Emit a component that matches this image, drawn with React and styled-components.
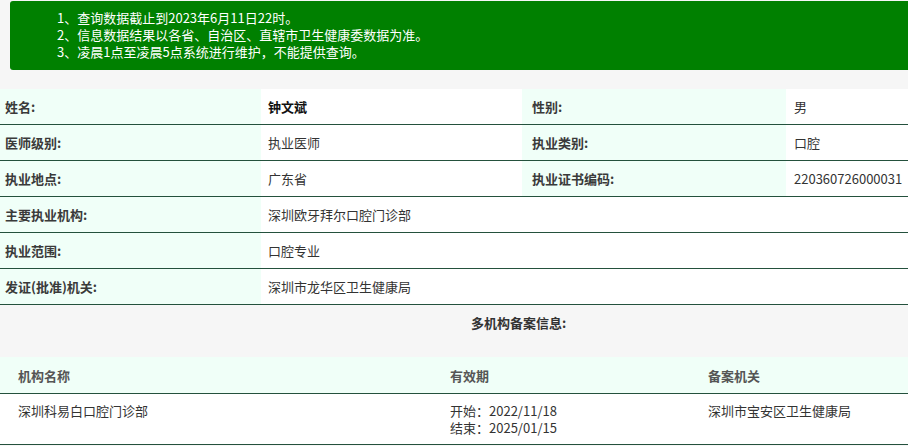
import React from "react";
import styled, { createGlobalStyle } from "styled-components";

const Global = createGlobalStyle`
  html, body { margin: 0; padding: 0; background: #f6f6f6; }
  body { font-family: "Microsoft YaHei", "Noto Sans CJK SC", "Noto Sans", sans-serif; font-size: 13px; color: #333; }
  * { box-sizing: border-box; }
`;

const Page = styled.div`
  width: 908px;
  padding-top: 1px;
`;

const Notice = styled.div`
  margin-left: 10px;
  height: 69px;
  background: #008000;
  border-radius: 3px 0 0 3px;
  color: #fff;
  padding: 8px 0 0 47px;
  line-height: 17px;
  font-size: 13px;
`;

const NoticeLine = styled.div`
  white-space: nowrap;
  height: 17px;
`;

const InfoTable = styled.div`
  margin-top: 19px;
  display: grid;
  grid-template-columns: 261px 261px 264px 1fr;
`;

const Cell = styled.div`
  height: 36px;
  border-bottom: 1px solid #24513d;
  background: ${(p) => (p.$label ? "#f0fff8" : "#fff")};
  padding-left: ${(p) => p.$pad}px;
  display: flex;
  align-items: center;
  grid-column: ${(p) => (p.$span ? `span ${p.$span}` : "auto")};
  font-weight: ${(p) => (p.$label || p.$strong ? 700 : 400)};
  color: ${(p) => (p.$strong ? "#111" : p.$label ? "#3a3a3a" : "#333")};
  white-space: nowrap;
  overflow: hidden;
`;

const SectionTitle = styled.div`
  height: 52px;
  padding: 9px 0 0 471px;
  font-weight: 700;
  color: #333;
  line-height: 17px;
`;

const SubTable = styled.div`
  display: grid;
  grid-template-columns: 432px 258px 1fr;
`;

const HeadCell = styled.div`
  height: 37px;
  background: #f0fff8;
  border-bottom: 1px solid #24513d;
  padding-left: ${(p) => p.$pad}px;
  display: flex;
  align-items: center;
  font-weight: 700;
  color: #555;
`;

const BodyCell = styled.div`
  height: 51px;
  background: #fff;
  border-bottom: 1px solid #24513d;
  padding: 8px 0 0 ${(p) => p.$pad}px;
  line-height: 17px;
  color: #333;
`;

const DateLine = styled.div`
  height: 17px;
`;

const rows = [
  [
    { t: "姓名:", label: true, pad: 5 },
    { t: "钟文斌", strong: true, pad: 7 },
    { t: "性别:", label: true, pad: 10 },
    { t: "男", pad: 8 },
  ],
  [
    { t: "医师级别:", label: true, pad: 5 },
    { t: "执业医师", pad: 7 },
    { t: "执业类别:", label: true, pad: 10 },
    { t: "口腔", pad: 8 },
  ],
  [
    { t: "执业地点:", label: true, pad: 5 },
    { t: "广东省", pad: 7 },
    { t: "执业证书编码:", label: true, pad: 10 },
    { t: "220360726000031", pad: 8 },
  ],
  [
    { t: "主要执业机构:", label: true, pad: 5 },
    { t: "深圳欧牙拜尔口腔门诊部", pad: 7, span: 3 },
  ],
  [
    { t: "执业范围:", label: true, pad: 5 },
    { t: "口腔专业", pad: 7, span: 3 },
  ],
  [
    { t: "发证(批准)机关:", label: true, pad: 5 },
    { t: "深圳市龙华区卫生健康局", pad: 7, span: 3 },
  ],
];

export default function App() {
  return (
    <Page>
      <Global />
      <Notice>
        <NoticeLine>1、查询数据截止到2023年6月11日22时。</NoticeLine>
        <NoticeLine>2、信息数据结果以各省、自治区、直辖市卫生健康委数据为准。</NoticeLine>
        <NoticeLine>3、凌晨1点至凌晨5点系统进行维护，不能提供查询。</NoticeLine>
      </Notice>
      <InfoTable>
        {rows.flatMap((r, i) =>
          r.map((c, j) => (
            <Cell
              key={`${i}-${j}`}
              $label={c.label}
              $strong={c.strong}
              $pad={c.pad}
              $span={c.span}
            >
              {c.t}
            </Cell>
          ))
        )}
      </InfoTable>
      <SectionTitle>多机构备案信息:</SectionTitle>
      <SubTable>
        <HeadCell $pad={18}>机构名称</HeadCell>
        <HeadCell $pad={18}>有效期</HeadCell>
        <HeadCell $pad={18}>备案机关</HeadCell>
        <BodyCell $pad={18}>深圳科易白口腔门诊部</BodyCell>
        <BodyCell $pad={18}>
          <DateLine>开始：2022/11/18</DateLine>
          <DateLine>结束：2025/01/15</DateLine>
        </BodyCell>
        <BodyCell $pad={18}>深圳市宝安区卫生健康局</BodyCell>
      </SubTable>
    </Page>
  );
}
